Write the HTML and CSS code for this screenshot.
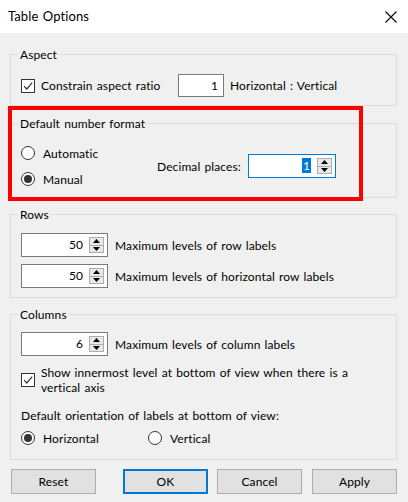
FILE: index.html
```html
<!DOCTYPE html>
<html>
<head>
<meta charset="utf-8">
<title>Table Options</title>
<link rel="stylesheet" href="styles.css">
</head>
<body>
<div class="window">
  <div class="titlebar">
    <span class="title">Table Options</span>
    <svg class="close" width="12" height="12" viewBox="0 0 12 12"><path d="M0.5 0.5 L11.5 11.5 M11.5 0.5 L0.5 11.5" stroke="#000" stroke-width="1.1" fill="none"/></svg>
  </div>
  <div class="body">
    <fieldset class="group aspect">
      <legend>Aspect</legend>
      <div class="row">
        <label class="check ratio-check">
          <span class="box"><svg width="12" height="12" viewBox="0 0 12 12"><path d="M2 6.2 L4.8 9 L10.2 2.6" stroke="#333" stroke-width="1.2" fill="none"/></svg></span>
          <span>Constrain aspect ratio</span>
        </label>
        <span class="textbox">1</span>
        <span class="text">Horizontal : Vertical</span>
      </div>
    </fieldset>

    <fieldset class="group numfmt">
      <legend>Default number format</legend>
      <div class="numrow">
        <div class="radios">
          <label class="radio"><span class="circle"></span><span>Automatic</span></label>
          <label class="radio"><span class="circle on"></span><span>Manual</span></label>
        </div>
        <span class="dec-label">Decimal places:</span>
        <span class="spin focus">
          <span class="val"><span class="sel">1</span></span>
          <span class="btns">
            <span class="btn"><svg width="7" height="4" viewBox="0 0 7 4"><path d="M0 4 L3.5 0 L7 4 Z" fill="#000"/></svg></span>
            <span class="btn"><svg width="7" height="4" viewBox="0 0 7 4"><path d="M0 0 L3.5 4 L7 0 Z" fill="#000"/></svg></span>
          </span>
        </span>
      </div>
    </fieldset>

    <fieldset class="group rows">
      <legend>Rows</legend>
      <div class="spinrow">
        <span class="spin">
          <span class="val">50</span>
          <span class="btns">
            <span class="btn"><svg width="7" height="4" viewBox="0 0 7 4"><path d="M0 4 L3.5 0 L7 4 Z" fill="#000"/></svg></span>
            <span class="btn"><svg width="7" height="4" viewBox="0 0 7 4"><path d="M0 0 L3.5 4 L7 0 Z" fill="#000"/></svg></span>
          </span>
        </span>
        <span class="text">Maximum levels of row labels</span>
      </div>
      <div class="spinrow">
        <span class="spin">
          <span class="val">50</span>
          <span class="btns">
            <span class="btn"><svg width="7" height="4" viewBox="0 0 7 4"><path d="M0 4 L3.5 0 L7 4 Z" fill="#000"/></svg></span>
            <span class="btn"><svg width="7" height="4" viewBox="0 0 7 4"><path d="M0 0 L3.5 4 L7 0 Z" fill="#000"/></svg></span>
          </span>
        </span>
        <span class="text">Maximum levels of horizontal row labels</span>
      </div>
    </fieldset>

    <fieldset class="group columns">
      <legend>Columns</legend>
      <div class="spinrow">
        <span class="spin">
          <span class="val">6</span>
          <span class="btns">
            <span class="btn"><svg width="7" height="4" viewBox="0 0 7 4"><path d="M0 4 L3.5 0 L7 4 Z" fill="#000"/></svg></span>
            <span class="btn"><svg width="7" height="4" viewBox="0 0 7 4"><path d="M0 0 L3.5 4 L7 0 Z" fill="#000"/></svg></span>
          </span>
        </span>
        <span class="text">Maximum levels of column labels</span>
      </div>
      <label class="check multi">
        <span class="box"><svg width="12" height="12" viewBox="0 0 12 12"><path d="M2 6.2 L4.8 9 L10.2 2.6" stroke="#333" stroke-width="1.2" fill="none"/></svg></span>
        <span>Show innermost level at bottom of view when there is a<br>vertical axis</span>
      </label>
      <div class="orient-label">Default orientation of labels at bottom of view:</div>
      <div class="orient">
        <label class="radio horiz"><span class="circle on"></span><span>Horizontal</span></label>
        <label class="radio"><span class="circle"></span><span>Vertical</span></label>
      </div>
    </fieldset>

    <div class="buttons">
      <button class="reset">Reset</button>
      <button class="ok">OK</button>
      <button class="cancel">Cancel</button>
      <button class="apply">Apply</button>
    </div>
  </div>
  <div class="highlight"></div>
</div>
</body>
</html>
```

FILE: styles.css
```css
* { box-sizing: border-box; }
html, body { margin: 0; padding: 0; }
body {
  font-family: Lato, "Noto Sans", sans-serif;
  font-size: 12px;
  line-height: 15px;
  letter-spacing: 0.1px;
  word-spacing: 1px;
  color: #000;
  background: #f0f0f0;
}
.window {
  position: relative;
  width: 408px;
  height: 502px;
  background: #f0f0f0;
  overflow: hidden;
}
.titlebar {
  height: 33px;
  background: #fff;
  display: flex;
  align-items: center;
  justify-content: space-between;
  padding: 0 11px 0 8px;
}
.title { font-size: 13px; }
.close { display: block; }

.body {
  padding: 14px 11px 0 10px;
}
.group {
  margin: 0;
  border: 1px solid #dcdcdc;
  padding: 0 10px;
  min-width: 0;
}
.group legend {
  padding: 0 2px;
  margin-left: -3px;
  line-height: 15px;
}
.aspect { padding-top: 12px; padding-bottom: 8px; }
.numfmt { margin-top: 10px; padding-top: 12px; padding-bottom: 8px; }
.rows { margin-top: 9px; padding-top: 11px; padding-bottom: 9px; }
.columns { margin-top: 9px; padding-top: 10px; padding-bottom: 11px; }

.row {
  display: flex;
  align-items: center;
  height: 23px;
}
.check {
  display: flex;
  align-items: center;
}
.box {
  width: 14px;
  height: 14px;
  border: 1px solid #333;
  background: #fff;
  display: flex;
  align-items: center;
  justify-content: center;
  flex: none;
  margin-right: 6px;
}
.box svg { display: block; }
.ratio-check { width: 157px; }
.textbox {
  width: 46px;
  height: 23px;
  border: 1px solid #7a7a7a;
  background: #fff;
  text-align: right;
  padding-right: 5px;
  line-height: 21px;
}
.text { margin-left: 6px; white-space: nowrap; }

.numrow {
  display: flex;
  align-items: center;
}
.radios {
  width: 136px;
  display: flex;
  flex-direction: column;
  gap: 6px;
}
.radio {
  display: flex;
  align-items: center;
  height: 20px;
}
.circle {
  width: 14px;
  height: 14px;
  border: 1px solid #333;
  border-radius: 50%;
  background: #fff;
  margin-right: 8px;
  flex: none;
  display: flex;
  align-items: center;
  justify-content: center;
}
.circle.on::after {
  content: "";
  width: 8px;
  height: 8px;
  border-radius: 50%;
  background: #333;
}
.dec-label { width: 91px; white-space: nowrap; }

.spin {
  width: 87px;
  height: 24px;
  border: 1px solid #7a7a7a;
  background: #fff;
  display: flex;
  align-items: stretch;
}
.spin.focus { width: 88px; border-color: #0078d7; }
.spin .val {
  flex: 1;
  text-align: right;
  padding-right: 6px;
  line-height: 22px;
}
.sel {
  background: #0078d7;
  color: #fff;
  padding: 0 1px;
  display: inline-block;
  line-height: 15px;
}
.btns {
  width: 15px;
  margin: 3px 3px 3px 0;
  border: 1px solid #adadad;
  background: #e8e8e8;
  display: flex;
  flex-direction: column;
}
.btn {
  flex: 1;
  display: flex;
  align-items: center;
  justify-content: center;
}
.btn + .btn { border-top: 1px solid #adadad; }
.btn svg { display: block; }

.spinrow {
  display: flex;
  align-items: center;
}
.spinrow + .spinrow { margin-top: 7px; }
.spinrow .text { margin-left: 7px; }

.multi {
  margin-top: 9px;
  white-space: nowrap;
}
.orient-label { margin-top: 13px; }
.orient {
  margin-top: 5px;
  display: flex;
}
.horiz { width: 127px; }

.buttons {
  display: flex;
  margin-top: 9px;
  padding-left: 1px;
}
.buttons button {
  width: 85px;
  height: 25px;
  font: inherit;
  letter-spacing: inherit;
  word-spacing: inherit;
  color: #000;
  background: #e1e1e1;
  border: 1px solid #adadad;
  padding: 0;
  margin: 0;
}
.buttons .ok { margin-left: 27px; border: 2px solid #0078d7; }
.buttons .cancel { margin-left: 9px; }
.buttons .apply { margin-left: 10px; }

.highlight {
  position: absolute;
  left: 8px;
  top: 106px;
  width: 355px;
  height: 95px;
  border: 4px solid #ff0000;
  pointer-events: none;
}
```
